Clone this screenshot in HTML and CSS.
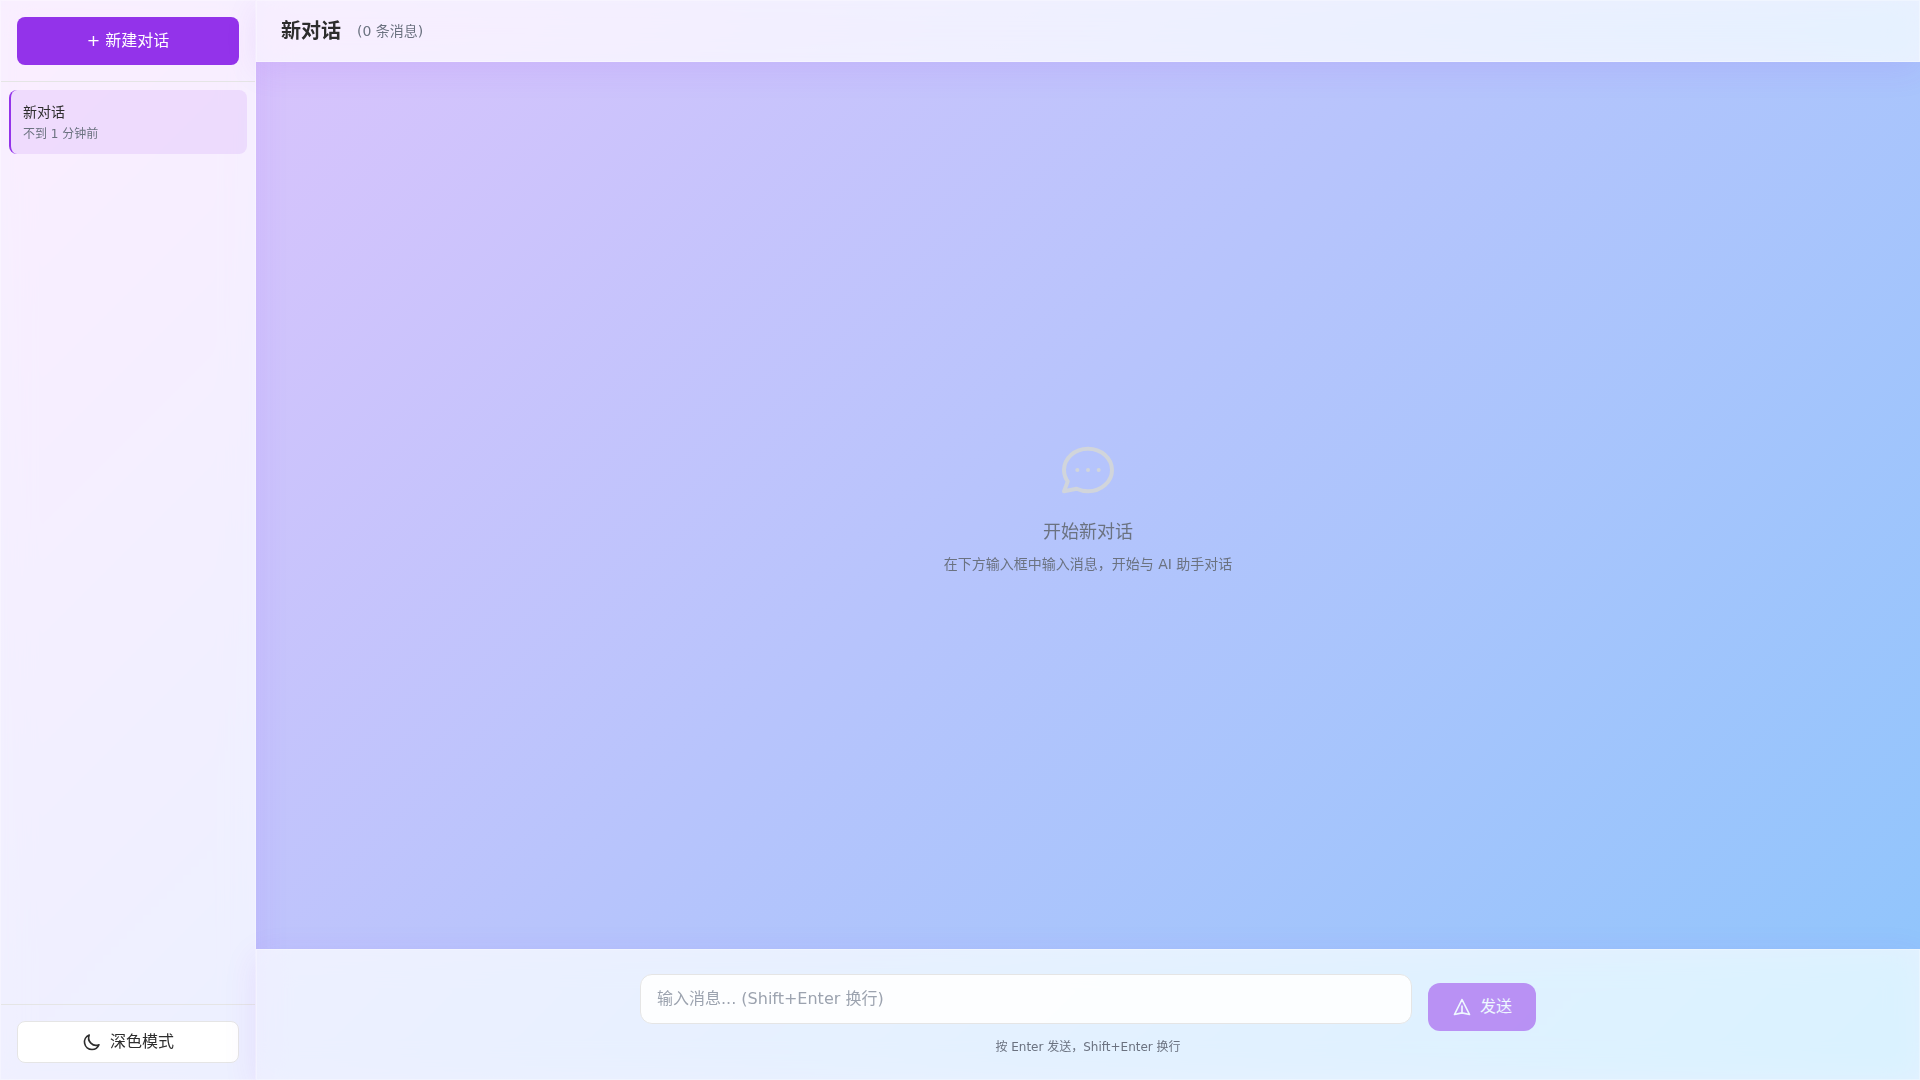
FILE: index.html
```html
<!DOCTYPE html>
<html lang="zh-CN">
  <head>
    <meta charset="utf-8">
    <meta name="viewport" content="width=device-width, initial-scale=1.0">
    <title>新对话</title>
    <link rel="stylesheet" href="styles.css">
  </head>
  <body>
    <div class="app">
      <aside class="sidebar glass">
        <div class="sidebar-top">
          <button type="button" class="btn btn-new">+ 新建对话</button>
        </div>
        <nav class="chat-list">
          <a href="#" class="chat-item active">
            <span class="chat-title">新对话</span>
            <span class="chat-time">不到 1 分钟前</span>
          </a>
        </nav>
        <div class="sidebar-bottom">
          <button type="button" class="btn btn-theme">
            <svg class="icon" viewBox="0 0 24 24" aria-hidden="true"><path d="M20.354 15.354A9 9 0 0 1 8.646 3.646 9.003 9.003 0 0 0 12 21a9.003 9.003 0 0 0 8.354-5.646z"/></svg>
            深色模式
          </button>
        </div>
      </aside>

      <main class="main">
        <header class="chat-header glass">
          <h1>新对话</h1>
          <span class="count">(0 条消息)</span>
        </header>

        <section class="messages">
          <svg class="empty-icon" viewBox="0 0 24 24" aria-hidden="true"><path d="M8 12h.01M12 12h.01M16 12h.01M21 12c0 4.418-4.03 8-9 8a9.863 9.863 0 0 1-4.255-.949L3 20l1.395-3.72C3.512 15.042 3 13.574 3 12c0-4.418 4.03-8 9-8s9 3.582 9 8z"/></svg>
          <h2>开始新对话</h2>
          <p>在下方输入框中输入消息，开始与 AI 助手对话</p>
        </section>

        <footer class="composer glass">
          <form class="composer-form">
            <div class="input-wrap">
              <textarea rows="1" aria-label="消息" placeholder="输入消息... (Shift+Enter 换行)"></textarea>
            </div>
            <button type="submit" class="btn btn-send" disabled>
              <svg class="icon" viewBox="0 0 24 24" aria-hidden="true"><path d="M12 19l9 2-9-18-9 18 9-2zm0 0v-8"/></svg>
              发送
            </button>
          </form>
          <p class="hint">按 Enter 发送，Shift+Enter 换行</p>
        </footer>
      </main>
    </div>
  </body>
</html>
```
FILE: styles.css
```css
* {
  box-sizing: border-box;
  margin: 0;
  padding: 0;
}

body {
  background: linear-gradient(135deg, #e0c3fc 0%, #8ec5fc 100%) fixed;
  color: #2d2d2d;
  font-family: "DejaVu Sans", "Noto Sans CJK SC", sans-serif;
  font-size: 16px;
  line-height: 24px;
}

button, textarea {
  font: inherit;
  color: inherit;
}

.app {
  display: flex;
  height: 100vh;
}

.glass {
  background: rgba(255, 255, 255, 0.75);
  backdrop-filter: blur(16px) saturate(180%);
  border: 1px solid rgba(255, 255, 255, 0.3);
  box-shadow: 0 8px 32px rgba(147, 51, 234, 0.1);
}

.btn {
  display: flex;
  align-items: center;
  justify-content: center;
  gap: 8px;
  border: none;
  cursor: pointer;
}

.icon {
  width: 20px;
  height: 20px;
  fill: none;
  stroke: currentColor;
  stroke-width: 2;
  stroke-linecap: round;
  stroke-linejoin: round;
}

/* Sidebar */
.sidebar {
  display: flex;
  flex-direction: column;
  flex: 0 0 256px;
}

.sidebar-top {
  padding: 16px;
  border-bottom: 1px solid #e5e5e5;
}

.btn-new {
  width: 100%;
  padding: 12px 16px;
  border-radius: 8px;
  background: #9333ea;
  color: #fff;
}

.chat-list {
  flex: 1;
  padding: 8px;
  overflow-y: auto;
}

.chat-item {
  display: block;
  padding: 12px;
  border-radius: 8px;
  color: inherit;
  text-decoration: none;
}

.chat-item.active {
  background: rgba(147, 51, 234, 0.1);
  border-left: 2px solid #9333ea;
}

.chat-title {
  display: block;
  font-size: 14px;
  line-height: 20px;
}

.chat-time {
  display: block;
  margin-top: 4px;
  color: #6b7280;
  font-size: 12px;
  line-height: 16px;
}

.sidebar-bottom {
  padding: 16px;
  border-top: 1px solid #e5e5e5;
}

.btn-theme {
  width: 100%;
  padding: 8px 16px;
  border: 1px solid #e5e5e5;
  border-radius: 8px;
  background: #fff;
}

/* Conversation */
.main {
  display: flex;
  flex-direction: column;
  flex: 1;
  min-width: 0;
}

.chat-header {
  display: flex;
  align-items: center;
  gap: 16px;
  padding: 16px 24px;
}

.chat-header h1 {
  font-size: 20px;
  line-height: 28px;
}

.count {
  color: #6b7280;
  font-size: 14px;
}

.messages {
  display: flex;
  flex: 1;
  flex-direction: column;
  align-items: center;
  justify-content: center;
  color: #6b7280;
}

.empty-icon {
  width: 64px;
  height: 64px;
  margin-bottom: 16px;
  fill: none;
  stroke: #d1d5db;
  stroke-width: 1.5;
  stroke-linecap: round;
  stroke-linejoin: round;
}

.messages h2 {
  margin-bottom: 8px;
  font-size: 18px;
  font-weight: normal;
  line-height: 28px;
}

.messages p {
  font-size: 14px;
  line-height: 20px;
}

.composer {
  padding: 24px;
}

.composer-form {
  display: flex;
  align-items: flex-end;
  gap: 16px;
  max-width: 896px;
  margin: 0 auto;
}

.input-wrap {
  flex: 1;
  padding-bottom: 7px;
}

.input-wrap textarea {
  display: block;
  width: 100%;
  height: 50px;
  padding: 12px 16px;
  border: 1px solid #e5e5e5;
  border-radius: 12px;
  background: rgba(255, 255, 255, 0.9);
  resize: none;
}

.input-wrap textarea::placeholder {
  color: #9ca3af;
}

.btn-send {
  padding: 12px 24px;
  border-radius: 12px;
  background: #9333ea;
  color: #fff;
  opacity: 0.5;
}

.hint {
  margin-top: 8px;
  color: #6b7280;
  font-size: 12px;
  line-height: 16px;
  text-align: center;
}
```
